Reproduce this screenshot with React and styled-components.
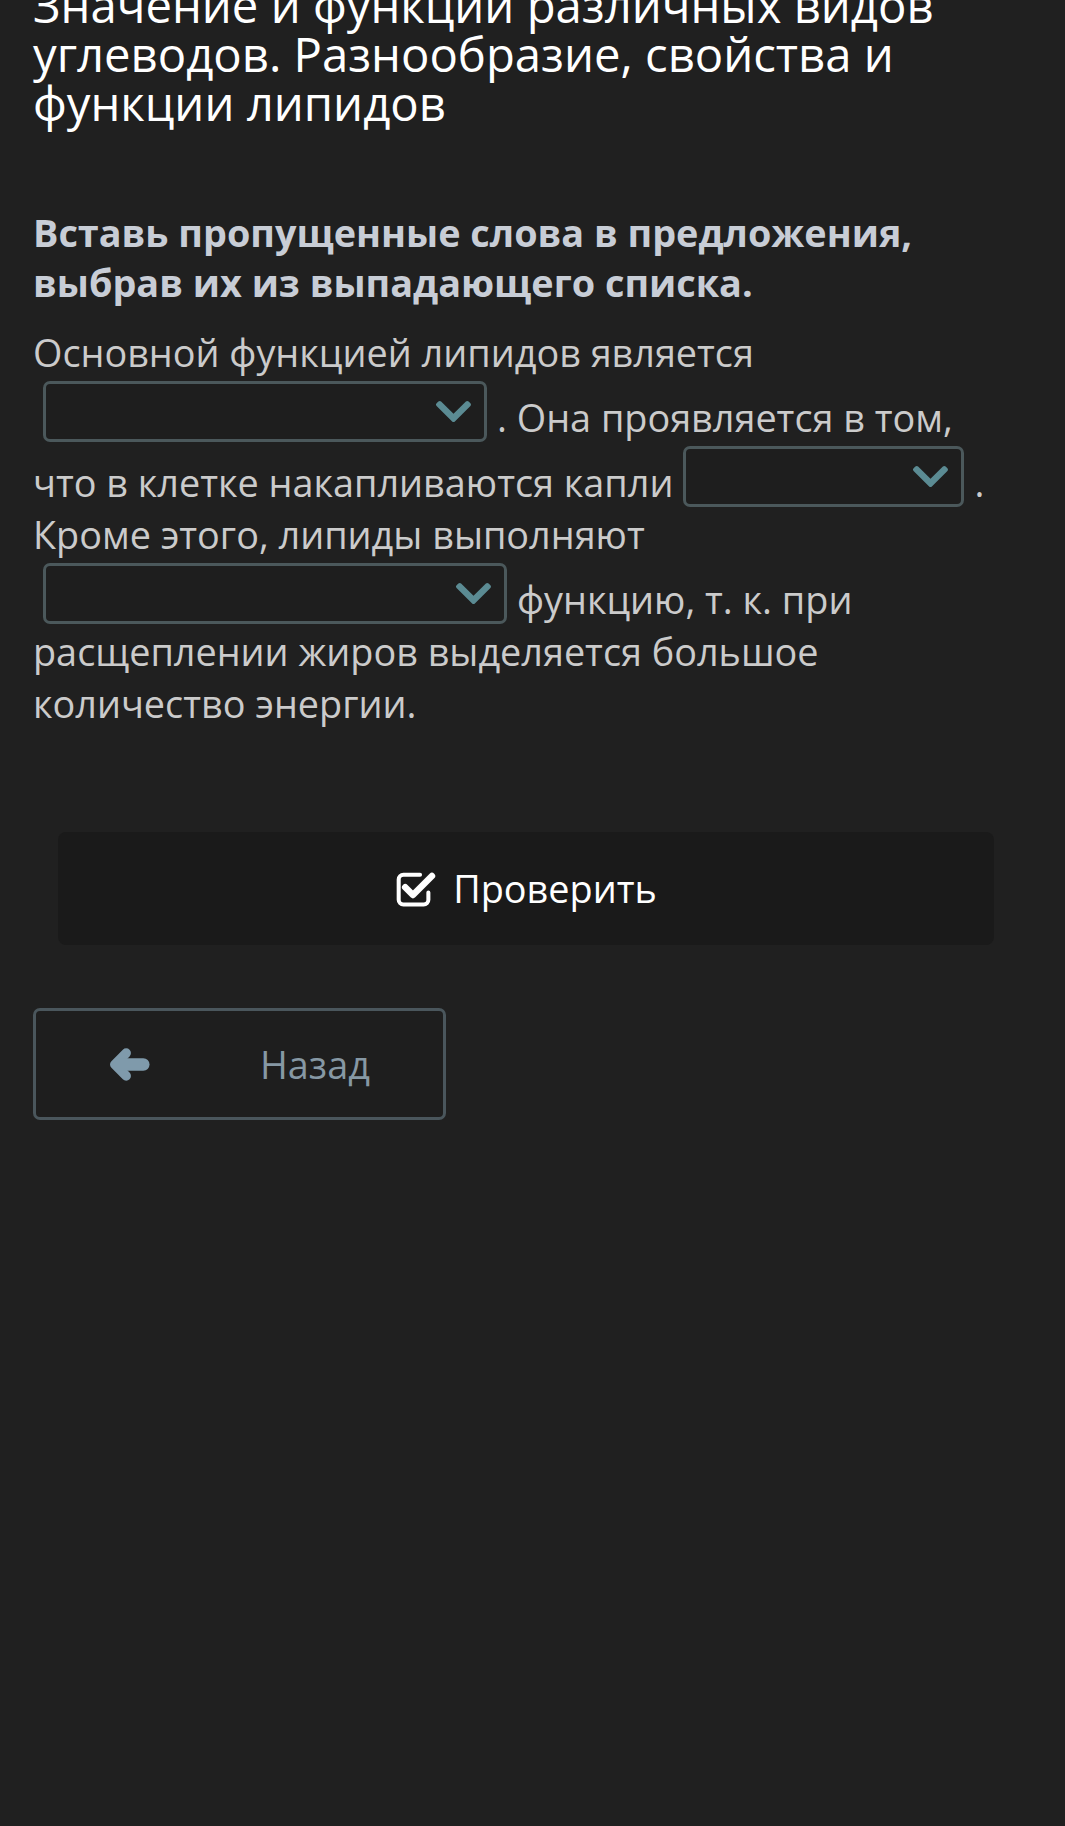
import { createGlobalStyle } from 'styled-components';
import styled from 'styled-components';
import { FaChevronDown } from 'react-icons/fa';

const GlobalStyle = createGlobalStyle`
  html, body {
    margin: 0;
    padding: 0;
    background: #202020;
  }
  body {
    font-family: 'Open Sans', 'Noto Sans', sans-serif;
  }
`;

const Page = styled.div`
  min-height: 1826px;
  background: #202020;
  padding: 0 60px 0 33px;
  box-sizing: border-box;
  overflow: hidden;
`;

const Title = styled.h1`
  margin: -20px 0 0;
  font-size: 47.25px;
  line-height: 49px;
  font-weight: 400;
  color: #ffffff;
`;

const Instruction = styled.p`
  margin: 81px 0 0;
  font-size: 37.8px;
  line-height: 50px;
  font-weight: 700;
  color: #c8cdd6;
`;

const Body = styled.p`
  margin: 19px 0 0;
  font-size: 37.8px;
  line-height: 52px;
  color: #cbcbcb;
`;

const SelectBox = styled.span`
  display: inline-flex;
  align-items: center;
  justify-content: flex-end;
  box-sizing: border-box;
  width: ${(p) => p.$width}px;
  height: 61px;
  margin: 2px 10px 1px 10px;
  padding-right: 10px;
  vertical-align: text-bottom;
  border: 3px solid #4b585b;
  border-radius: 7px;
  background: #1e1e1e;
  color: #5b8b93;
`;

const Select = ({ width }) => (
  <SelectBox $width={width}>
    <FaChevronDown size={41} />
  </SelectBox>
);

const CheckButton = styled.button`
  display: flex;
  align-items: center;
  justify-content: center;
  gap: 15px;
  width: 936px;
  height: 113px;
  margin: 102px 0 0 25px;
  border: none;
  border-radius: 8px;
  background: #1a1a1a;
  color: #ffffff;
  font-family: inherit;
  font-size: 37.8px;
  cursor: pointer;
`;

const BackButton = styled.button`
  display: flex;
  align-items: center;
  box-sizing: border-box;
  width: 413px;
  height: 112px;
  margin-top: 63px;
  padding: 0 0 0 74px;
  border: 3px solid #4a565c;
  border-radius: 7px;
  background: #1e1e1e;
  color: #8698a4;
  font-family: inherit;
  font-size: 37.8px;
  cursor: pointer;
`;

const BackIcon = styled.span`
  display: flex;
  margin-right: 110px;
`;

const CheckSquareIcon = () => (
  <svg width="43" height="38" viewBox="0 0 36 32" fill="none">
    <path
      d="M21 4 H7 A4 4 0 0 0 3 8 V25 A4 4 0 0 0 7 29 H24 A4 4 0 0 0 28 25 V19"
      stroke="#fff"
      strokeWidth="3.4"
      strokeLinecap="round"
    />
    <path
      d="M8.5 14.5 L15 21 L31 5"
      stroke="#fff"
      strokeWidth="5.5"
      strokeLinecap="round"
      strokeLinejoin="round"
    />
  </svg>
);

const ArrowLeftIcon = () => (
  <svg width="40" height="33" viewBox="0 0 42 34" fill="none">
    <path
      d="M17 5 L5 17 L17 29"
      stroke="#7f9aab"
      strokeWidth="10"
      strokeLinecap="round"
      strokeLinejoin="round"
    />
    <path d="M9 17 H35" stroke="#7f9aab" strokeWidth="13" strokeLinecap="round" />
  </svg>
);

const App = () => {
  return (
    <>
      <GlobalStyle />
      <Page>
        <Title>
          Значение и функции различных видов углеводов. Разнообразие, свойства и
          функции липидов
        </Title>
        <Instruction>
          Вставь пропущенные слова в предложения, выбрав их из выпадающего
          списка.
        </Instruction>
        <Body>
          Основной функцией липидов является
          <Select width={444} />. Она проявляется в том, что в клетке
          накапливаются капли
          <Select width={281} />
          <span>. </span>Кроме этого, липиды выполняют
          <Select width={464} />
          функцию, т. к. при расщеплении жиров выделяется большое количество
          энергии.
        </Body>
        <CheckButton>
          <CheckSquareIcon />
          Проверить
        </CheckButton>
        <BackButton>
          <BackIcon>
            <ArrowLeftIcon />
          </BackIcon>
          Назад
        </BackButton>
      </Page>
    </>
  );
};

export default App;
